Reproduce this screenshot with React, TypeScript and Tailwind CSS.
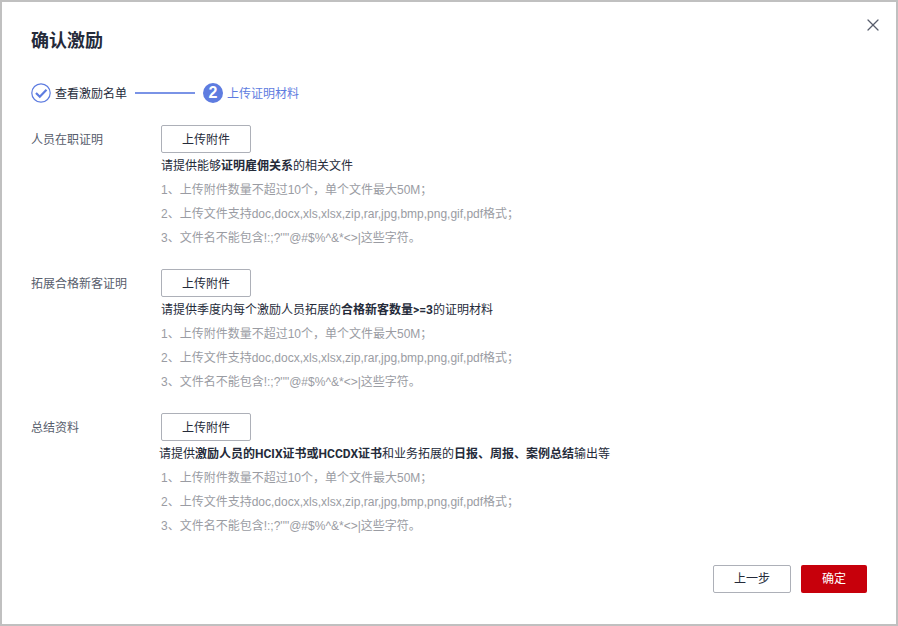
import React from "react";
import { X } from "lucide-react";

interface SectionProps {
  label: string;
  hint: React.ReactNode;
  hintClass?: string;
}

const rules = [
  "1、上传附件数量不超过10个，单个文件最大50M；",
  "2、上传文件支持doc,docx,xls,xlsx,zip,rar,jpg,bmp,png,gif,pdf格式；",
  "3、文件名不能包含!:;?'\"'@#$%^&*<>|这些字符。",
];

const Strong: React.FC<{ children: React.ReactNode }> = ({ children }) => (
  <b className="font-['Roboto','Noto_Sans_CJK_SC',sans-serif]">{children}</b>
);

const Section: React.FC<SectionProps> = ({ label, hint, hintClass = "" }) => {
  return (
    <div className="flex mb-[19px]">
      <div className="w-[130px] pt-[6px] leading-[18px] text-[#575d6c]">{label}</div>
      <div className="flex-1">
        <button className="block w-[90px] h-[28px] border border-[#adb0b8] rounded-[2px] bg-white text-[#252b3a]">
          <span className="relative top-[1px]">上传附件</span>
        </button>
        <p className={`h-[25px] leading-[27px] text-[#252b3a] whitespace-nowrap ${hintClass}`}>{hint}</p>
        {rules.map((rule) => (
          <p key={rule} className="h-[24px] leading-[24px] text-[#9a9ca3] whitespace-nowrap">
            {rule}
          </p>
        ))}
      </div>
    </div>
  );
};

const App: React.FC = () => {
  return (
    <div className="relative w-[898px] h-[626px] bg-white border-2 border-[#c0c0c0] text-[12px] font-['Liberation_Sans','Noto_Sans_CJK_SC',sans-serif] overflow-hidden">
      <button className="absolute top-[13px] right-[13px] text-[#575d6c]">
        <X size={20} strokeWidth={1.5} />
      </button>
      <div className="pl-[29px] pr-[29px] pt-[26px]">
        <h1 className="h-[26px] leading-[26px] text-[18px] font-bold text-[#252b3a]">确认激励</h1>

        <div className="flex items-center h-[22px] mt-[28px]">
          <svg width="20" height="20" viewBox="0 0 20 20" fill="none">
            <circle cx="10" cy="10" r="9.2" stroke="#5e7ce0" strokeWidth="1.2" />
            <path d="M5 10 L8.8 13.8 L15.5 6.8" stroke="#5e7ce0" strokeWidth="2.2" />
          </svg>
          <span className="ml-[4px] pt-[2px] text-[#252b3a]">查看激励名单</span>
          <span className="ml-[8px] w-[60px] h-[2px] bg-[#7a93e6]" />
          <span className="ml-[8px] flex items-center justify-center w-[20px] h-[20px] rounded-full bg-[#5e7ce0] text-white text-[16px] font-bold">
            2
          </span>
          <span className="ml-[4px] pt-[2px] text-[#5e7ce0]">上传证明材料</span>
        </div>

        <div className="mt-[21px]">
          <Section
            label="人员在职证明"
            hint={
              <>
                请提供能够<Strong>证明雇佣关系</Strong>的相关文件
              </>
            }
          />
          <Section
            label="拓展合格新客证明"
            hint={
              <>
                请提供季度内每个激励人员拓展的<Strong>合格新客数量&gt;=3</Strong>的证明材料
              </>
            }
          />
          <Section
            label="总结资料"
            hintClass="-ml-[2px]"
            hint={
              <>
                请提供<Strong>激励人员的HCIX证书或HCCDX证书</Strong>和业务拓展的<Strong>日报、周报、案例总结</Strong>输出等
              </>
            }
          />
        </div>

        <div className="flex justify-end gap-[10px] mt-[27px]">
          <button className="w-[78px] h-[28px] border border-[#adb0b8] rounded-[2px] bg-white text-[#252b3a]">
            上一步
          </button>
          <button className="w-[66px] h-[28px] rounded-[2px] bg-[#c7000b] text-white">确定</button>
        </div>
      </div>
    </div>
  );
};

export default App;
